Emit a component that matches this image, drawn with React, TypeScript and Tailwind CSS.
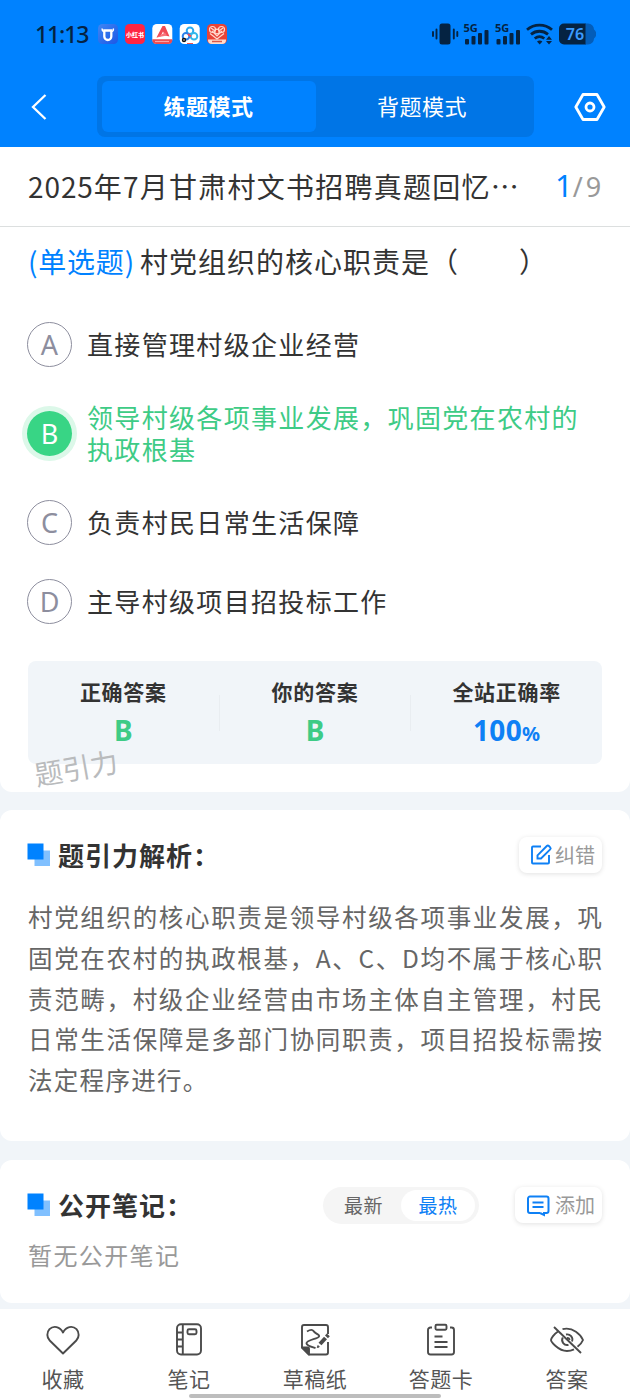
import React from "react";

const CJK = "font-['Noto_Sans_CJK_SC',sans-serif]";
const LATIN = "font-['Noto_Sans','Noto_Sans_CJK_SC',sans-serif]";

function AppIcons() {
  return (
    <svg width="130" height="22" viewBox="0 0 130 22">
      <defs>
        <linearGradient id="ox" x1="0" y1="0" x2="1" y2="1">
          <stop offset="0" stopColor="#3f86f3" />
          <stop offset="1" stopColor="#1b57e6" />
        </linearGradient>
      </defs>
      <rect x="0" y="1" width="20" height="20" rx="4.5" fill="url(#ox)" />
      <path d="M6.300 7.500h7v6a3.500 3.500 0 0 1-7 0z" fill="none" stroke="#fff" strokeWidth="2.300" />
      <path d="M6 8.500C4.300 8.300 4 7 4.300 5.500M13.600 8.500c1.700-.2 2-1.500 1.700-3" fill="none" stroke="#fff" strokeWidth="1.500" />
      <rect x="27" y="1" width="20" height="20" rx="4.500" fill="#ff2442" />
      <text x="37" y="13.500" fontSize="6" fontWeight="900" fill="#fff" textAnchor="middle" className={CJK}>小红书</text>
      <rect x="54.300" y="1" width="20" height="20" rx="4.500" fill="#fff" />
      <path d="M54.300 16.200h20v.8a4 4 0 0 1-4 4h-12a4 4 0 0 1-4-4z" fill="#ed4b50" />
      <path d="M58.500 14.500 64.500 3h2.500l4.500 10.500-4.500-1-2-4-2.500 5z" fill="#f04a55" />
      <path d="M58.500 14.500 67 9.500l2 3z" fill="#f7737b" />
      <path d="M57 18.500h14" stroke="#f7a5a8" strokeWidth="1.200" />
      <rect x="81.700" y="1" width="20" height="20" rx="4.500" fill="#fff" />
      <g fill="none" strokeWidth="2">
        <circle cx="92" cy="7.700" r="3.300" stroke="#29aaf0" />
        <circle cx="88" cy="13.300" r="3.300" stroke="#2b7fe8" />
        <circle cx="96" cy="13.300" r="3.300" stroke="#33b9ea" />
        <path d="m90 11 3 2.500" stroke="#ee4c59" />
      </g>
      <circle cx="86" cy="17" r="2.200" fill="#111" />
      <circle cx="86" cy="17" r=".7" fill="#fff" />
      <path d="M89 20.500h6" stroke="#f05050" strokeWidth="1" />
      <rect x="109" y="1" width="20" height="20" rx="4.500" fill="#e84336" />
      <g fill="none" stroke="#ffd9cc" strokeWidth="1.200">
        <circle cx="114.500" cy="6.500" r="3" />
        <circle cx="123.500" cy="6.500" r="3" />
        <circle cx="119" cy="8.500" r="2.400" />
        <path d="M112 10.500 119 16l7-5.500M114 8l5 5 5-5M113 5l4 3M125 5l-4 3" />
      </g>
      <path d="M110 16.500h18v.5a4 4 0 0 1-4 4h-10a4 4 0 0 1-4-4z" fill="#ffdccb" />
      <path d="M114 18.500h10" stroke="#d95849" strokeWidth="1.500" />
    </svg>
  );
}

function Signal({ x }: { x: number }) {
  return (
    <g transform={`translate(${x} 5)`}>
      <text x="-1.500" y="8.500" fontSize="11" fontWeight="700" className={LATIN}>5G</text>
      <rect x="0" y="16" width="4" height="5.500" rx="1" />
      <rect x="6.500" y="13" width="4" height="8.500" rx="1" />
      <rect x="13" y="10" width="4" height="11.500" rx="1" />
      <rect x="19.500" y="7" width="4" height="14.500" rx="1" />
    </g>
  );
}

function StatusIcons() {
  return (
    <svg className="-mt-[5px]" width="164" height="30" viewBox="0 0 164 30" fill="#052342">
      <g transform="translate(0 5)">
        <rect x="7.500" y=".5" width="11" height="21" rx="2.500" />
        <path d="M1 9v4M4.500 6.500v9M21.800 6.500v9M25.300 9v4" stroke="#052342" strokeWidth="1.900" strokeLinecap="round" />
        <g fill="none" stroke="#052342" strokeWidth="2.800">
          <path d="M95 6.700c7.200-6.200 17.800-6.200 25 0M99 11.300c5-4.100 12-4.100 17 0M102.700 15.500c3-2.300 6.600-2.300 9.600 0" />
        </g>
        <path d="M105 18.500c1.600-1.200 3.800-1.200 5.400 0l-2.700 3z" />
        <path d="m117 13 3 3.700h-6zM117 21.500l3-3.500h-6z" />
        <path d="M132 .5h22v21h-22a5 5 0 0 1-5-5v-11a5 5 0 0 1 5-5z" />
        <path d="M153.500 .5h2.500a6 6 0 0 1 6 6c3 2 3 7 0 9a6 6 0 0 1-6 6h-2.500z" fill="#035db9" />
        <text x="143" y="16.500" fontSize="16" fontWeight="600" fill="#3a9bff" textAnchor="middle" className={LATIN}>76</text>
      </g>
      <Signal x={33} />
      <Signal x={64.5} />
    </svg>
  );
}

function Option({ letter, text, row, selected }: { letter: string; text: string[]; row: string; selected?: boolean }) {
  return (
    <div className={`flex items-center pl-[27px] ${row}`}>
      <span
        className={`flex size-[45px] shrink-0 items-center justify-center rounded-full text-[27px] leading-none ${LATIN} ${
          selected ? "bg-[#38d585] text-white ring-[5px] ring-[#dcf8e9]" : "border-[1.5px] border-[#8d8e9e] text-[#8d8e9e]"
        }`}
      >
        {letter}
      </span>
      <div className={`ml-[15px] pb-px text-[26px] leading-8 tracking-[1.33px] whitespace-nowrap ${selected ? "text-[#3ecb86]" : "text-[#333]"}`}>
        {text.map((t) => (
          <div key={t}>{t}</div>
        ))}
      </div>
    </div>
  );
}

function Heading({ children }: { children: string }) {
  return (
    <div className="flex items-center">
      <svg className="-ml-px" width="24" height="24" viewBox="0 0 24 24">
        <rect x="7.500" y="7.500" width="15.500" height="15.500" fill="#80c0ff" />
        <rect x="0.500" y="0.500" width="16" height="16" fill="#0082ff" />
      </svg>
      <span className="ml-[7px] text-[26px] leading-9 font-bold tracking-[1px] text-[#333]">{children}</span>
    </div>
  );
}

function Stat({ label, children }: { label: string; children: React.ReactNode }) {
  return (
    <div className="flex flex-1 flex-col items-center">
      <span className="text-[21px] leading-[30px] font-bold tracking-[.7px] text-[#333]">{label}</span>
      <span className={`mt-[5px] flex h-[38px] items-baseline text-[28px] leading-[38px] font-bold ${LATIN}`}>{children}</span>
    </div>
  );
}

const analysis = [
  "村党组织的核心职责是领导村级各项事业发展，巩",
  "固党在农村的执政根基，A、C、D均不属于核心职",
  "责范畴，村级企业经营由市场主体自主管理，村民",
  "日常生活保障是多部门协同职责，项目招投标需按",
  "法定程序进行。",
];

const tabs: { label: string; icon: React.ReactNode }[] = [
  {
    label: "收藏",
    icon: <path d="M17 31.500 3.700 18.500A8.200 8.200 0 0 1 3.500 7.200C7.500 3.200 14 4.500 17 10.500c3-6 9.500-7.300 13.500-3.300a8.200 8.200 0 0 1-.2 11.300z" />,
  },
  {
    label: "笔记",
    icon: (
      <>
        <rect x="5" y="2.200" width="24" height="30.300" rx="4" />
        <path d="M10.800 2.200v30.300M5 10.500h5.800M5 17.500h5.800M5 24.500h5.800" />
        <rect x="15.500" y="7.200" width="9" height="5" rx="1.500" />
      </>
    ),
  },
  {
    label: "草稿纸",
    icon: (
      <>
        <path d="M30 12V5a2 2 0 0 0-2-2H6a2 2 0 0 0-2 2v20.500l7 7h17a2 2 0 0 0 2-2V20" />
        <path d="M4 25.500h6a1 1 0 0 1 1 1v6z" fill="#4b4b4b" />
        <path d="M9 9.500C13 7 14.500 7.500 15.500 9c1 1.800 2.500 2.200 4.500 3.500 2.500 1.700.5 3-2 3.800C14 17.600 8 19 8.500 21.500 9 24 14 25 17.500 26" />
        <path d="m22 22 5.500-6" strokeWidth="4" strokeLinecap="butt" />
        <path d="m28.500 14.900 1.800-2" strokeWidth="4" strokeLinecap="butt" />
        <path d="m20 23.500-.7 2 2-.6z" strokeWidth="1" fill="#4b4b4b" />
      </>
    ),
  },
  {
    label: "答题卡",
    icon: (
      <>
        <path d="M8 5.500H6.500a2.500 2.500 0 0 0-2.500 2.500v22a2.500 2.500 0 0 0 2.500 2.500h21a2.500 2.500 0 0 0 2.500-2.500V8a2.500 2.500 0 0 0-2.500-2.500H26" />
        <rect x="11.500" y="2.800" width="11" height="5" rx="1.200" />
        <path d="M10.500 14.500h8M10.500 20h13M10.500 25h13" />
      </>
    ),
  },
  {
    label: "答案",
    icon: (
      <>
        <path d="M8 9.500C4 12 1 16.500 1 18c0 1.500 7 11 16 11 2.700 0 5-.7 7-1.700M12.500 7.200C23 4.500 31 13 33 18c-1 2.500-3 5-5.500 6.700" />
        <path d="M12.800 15.500a5 5 0 0 0 5.700 7.300M16 12.500a5.200 5.200 0 0 1 6 7M17 16c2 0 2.500 1 2.500 2" />
        <path d="m4 5 27 26" />
      </>
    ),
  },
];

export default function App() {
  return (
    <div className={`flex h-[1400px] w-[630px] flex-col overflow-hidden bg-[#f1f5f9] ${CJK}`}>
      <header className="h-[147px] shrink-0 bg-[#0082ff]">
        <div className="flex h-[76px] items-start justify-between pt-[23px] pr-[34px] pl-[35px]">
          <div className="flex">
            <span className={`w-[63px] text-[23px] leading-[22px] font-medium tracking-[-1.1px] text-[#052342] ${LATIN}`}>11:13</span>
            <AppIcons />
          </div>
          <StatusIcons />
        </div>
        <div className="flex h-[61px] items-center">
          <svg className="ml-[30px]" width="18" height="28" viewBox="0 0 18 28" fill="none" stroke="#fff" strokeWidth="2.300">
            <path d="M15.500 2 3 14l12.500 12" />
          </svg>
          <div className="ml-[49px] flex h-[61px] w-[437px] rounded-lg bg-[#0075e6] p-[5px] text-center text-[22px] leading-[49px] tracking-[.5px] text-white">
            <div className="w-[214px] rounded-md bg-[#0082ff] pr-px font-bold">练题模式</div>
            <div className="flex-1 pr-px">背题模式</div>
          </div>
          <svg className="ml-[40px]" width="32" height="28" viewBox="0 0 32 28" fill="none" stroke="#fff" strokeWidth="2.800" strokeLinejoin="round">
            <path d="M9 1.500h14L30.200 14 23 26.500H9L1.800 14z" />
            <circle cx="16" cy="14" r="4" />
          </svg>
        </div>
      </header>

      <section className="relative h-[645px] shrink-0 rounded-b-xl bg-white">
        <div className="flex h-[80px] items-center border-b border-[#dcdfdf] pb-[2px] pl-7">
          <span className="w-[527px] text-[28px] leading-10 whitespace-nowrap text-[#333]">
            <span className="tracking-[.9px]">2025</span>
            <span className="tracking-[1.25px]">年7月甘肃村文书招聘真题回忆…</span>
          </span>
          <span className={`flex items-baseline leading-10 ${LATIN}`}>
            <span className="text-[31px] text-[#0082ff]">1</span>
            <span className="text-[27px] tracking-[3px] text-[#999]">/9</span>
          </span>
        </div>
        <div className="flex h-[67px] items-center pl-7 text-[28px] leading-10 tracking-[1px] whitespace-pre text-[#333]">
          <span className="w-[112px] tracking-[.8px] text-[#0082ff]">(单选题)</span>
          <span>村党组织的核心职责是（</span>
          <span className="ml-[60px]">）</span>
        </div>
        <Option letter="A" text={["直接管理村级企业经营"]} row="h-[101px]" />
        <Option letter="B" text={["领导村级各项事业发展，巩固党在农村的", "执政根基"]} row="h-[77px]" selected />
        <Option letter="C" text={["负责村民日常生活保障"]} row="h-[100px]" />
        <Option letter="D" text={["主导村级项目招投标工作"]} row="h-[58px]" />
        <div className="mx-7 mt-[31px] flex h-[103px] items-center rounded-lg bg-[#f1f5f9]">
          <Stat label="正确答案"><span className="text-[#3ecb86]">B</span></Stat>
          <i className="h-9 w-px bg-[#e9edf1]" />
          <Stat label="你的答案"><span className="text-[#3ecb86]">B</span></Stat>
          <i className="h-9 w-px bg-[#e9edf1]" />
          <Stat label="全站正确率">
            <span className="tracking-[.3px] text-[#0e80f5]">100<span className="text-[20px]">%</span></span>
          </Stat>
        </div>
        <span className="absolute top-[600px] left-[34px] -rotate-[10deg] text-[28px] leading-10 whitespace-nowrap text-[#b9bbbd]">题引力</span>
      </section>

      <section className="mt-[18px] h-[331px] shrink-0 rounded-xl bg-white px-7 pt-[27px]">
        <div className="flex h-9 items-center justify-between">
          <Heading>题引力解析：</Heading>
          <div className="flex h-9 w-[83px] items-center rounded-lg bg-white pl-[10px] text-[20px] text-[#999] shadow-[0_1px_5px_rgba(0,0,0,0.12)]">
            <svg width="24" height="24" viewBox="0 0 24 24" fill="none" stroke="#0e80f5" strokeWidth="1.900">
              <path d="M12 3.500H4a1 1 0 0 0-1 1v15a1 1 0 0 0 1 1h15a1 1 0 0 0 1-1V12" />
              <path d="m8.500 12.300 9.300-9.300a1.500 1.500 0 0 1 2.100 0l1.300 1.300a1.500 1.500 0 0 1 0 2.100L12 15.500H8.500z" />
            </svg>
            <span className="ml-[2px]">纠错</span>
          </div>
        </div>
        <div className="mt-[24px] text-[24.500px] leading-[40.800px] text-[#666]">
          {analysis.map((line, i) => (
            <p key={line} className={i < 4 ? "whitespace-nowrap [text-align-last:justify]" : "tracking-[1.300px]"}>
              {line}
            </p>
          ))}
        </div>
      </section>

      <section className="mt-[19px] h-[143px] shrink-0 rounded-xl bg-white px-7 pt-[27px]">
        <div className="flex h-9 items-center">
          <Heading>公开笔记：</Heading>
          <div className="ml-auto flex h-[37px] w-[156px] items-center rounded-full bg-[#f5f5f5] p-[3px] text-center text-[19px] leading-[30px] tracking-[.4px]">
            <span className="w-[75px] text-[#666]">最新</span>
            <span className="h-[31px] w-[74px] rounded-full bg-white text-[#0e80f5]">最热</span>
          </div>
          <div className="ml-[36px] flex h-9 w-[87px] items-center rounded-lg bg-white pl-[11px] text-[20px] text-[#999] shadow-[0_1px_5px_rgba(0,0,0,0.12)]">
            <svg width="26" height="24" viewBox="0 0 26 24" fill="none" stroke="#0e80f5" strokeWidth="2">
              <path d="M14 20H4a2 2 0 0 1-2-2V5.500a2 2 0 0 1 2-2h16.500a2 2 0 0 1 2 2V18a2 2 0 0 1-2 2h-2.500v2L14 20M6.500 9.500h11M6.500 14h11" />
            </svg>
            <span className="ml-[3px]">添加</span>
          </div>
        </div>
        <div className="mt-[14px] text-[24px] leading-9 tracking-[1.400px] text-[#999]">暂无公开笔记</div>
      </section>

      <nav className="relative mt-[6px] flex h-[91px] shrink-0 bg-white">
        {tabs.map((t) => (
          <div key={t.label} className="flex flex-1 flex-col items-center pt-[13px]">
            <svg width="34" height="36" viewBox="0 0 34 36" fill="none" stroke="#4b4b4b" strokeWidth="1.900" strokeLinejoin="round">
              {t.icon}
            </svg>
            <span className="mt-[5px] text-[21px] leading-[30px] tracking-[.5px] text-[#555]">{t.label}</span>
          </div>
        ))}
        <div className="absolute bottom-[2px] left-[189px] h-[4px] w-[252px] rounded-full bg-[#bdbdbd]" />
      </nav>
    </div>
  );
}
